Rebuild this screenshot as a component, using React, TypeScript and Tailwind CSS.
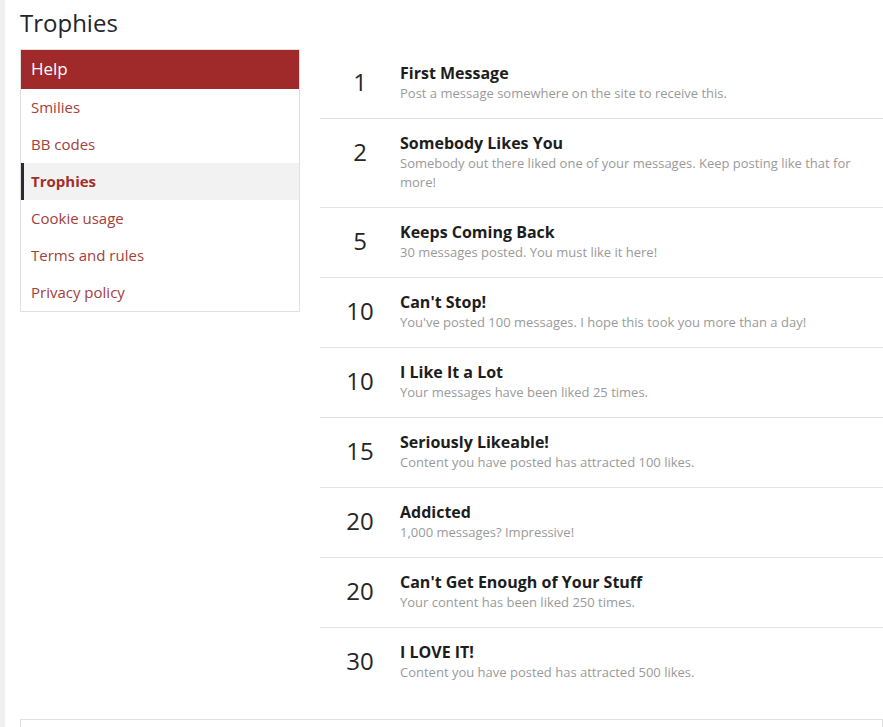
import React from "react";

interface Trophy {
  points: number;
  title: string;
  description: string;
}

const trophies: Trophy[] = [
  { points: 1, title: "First Message", description: "Post a message somewhere on the site to receive this." },
  {
    points: 2,
    title: "Somebody Likes You",
    description: "Somebody out there liked one of your messages. Keep posting like that for more!",
  },
  { points: 5, title: "Keeps Coming Back", description: "30 messages posted. You must like it here!" },
  { points: 10, title: "Can't Stop!", description: "You've posted 100 messages. I hope this took you more than a day!" },
  { points: 10, title: "I Like It a Lot", description: "Your messages have been liked 25 times." },
  { points: 15, title: "Seriously Likeable!", description: "Content you have posted has attracted 100 likes." },
  { points: 20, title: "Addicted", description: "1,000 messages? Impressive!" },
  { points: 20, title: "Can't Get Enough of Your Stuff", description: "Your content has been liked 250 times." },
  { points: 30, title: "I LOVE IT!", description: "Content you have posted has attracted 500 likes." },
];

const helpLinks = ["Smilies", "BB codes", "Trophies", "Cookie usage", "Terms and rules", "Privacy policy"];

export default function App() {
  return (
    <div className="min-h-screen bg-white border-l-[5px] border-[#efefef] font-['Open_Sans',sans-serif] overflow-hidden">
      <div className="pl-[15px]">
        {/* ===== PAGE TITLE ===== */}
        <h1 className="text-[24px] leading-[30px] pt-[8px] pb-[11px] text-[#24242c]">Trophies</h1>

        <div className="flex gap-5 items-start">
          {/* ===== SIDEBAR ===== */}
          <div className="w-[280px] shrink-0 border border-[#e0e0e0]">
            <div className="h-[39px] bg-[#a02a2a] text-white text-[17px] leading-[38px] pl-[10px]">Help</div>
            <ul>
              {helpLinks.map((link) =>
                link === "Trophies" ? (
                  <li
                    key={link}
                    className="h-[37px] bg-[#f2f2f2] border-l-[3px] border-[#2a2a33] pl-[7px] text-[15px] leading-[37px] font-bold text-[#a0302c]"
                  >
                    {link}
                  </li>
                ) : (
                  <li key={link} className="h-[37px] pl-[10px] text-[15px] leading-[37px] text-[#a3403b]">
                    {link}
                  </li>
                )
              )}
            </ul>
          </div>

          {/* ===== TROPHY LIST ===== */}
          <ol className="flex-1 min-w-0">
            {trophies.map((t, i) => (
              <li
                key={i}
                className={`flex items-start pt-[13px] pb-[15px] ${
                  i < trophies.length - 1 ? "border-b border-[#e3e3e3]" : ""
                }`}
              >
                <div className="w-[80px] shrink-0 pt-[5px] text-center text-[24px] leading-[30px] text-[#262626]">
                  {t.points}
                </div>
                <div className="flex-1 pr-[10px]">
                  <h3 className="text-[16px] leading-[22px] font-bold text-[#1d1d1d]">{t.title}</h3>
                  <p className="text-[13px] leading-[19px] text-[#9a9a9a]">{t.description}</p>
                </div>
              </li>
            ))}
          </ol>
        </div>

        {/* ===== BOTTOM BOX ===== */}
        <div className="mt-[22px] h-[60px] border border-[#e0e0e0]"></div>
      </div>
    </div>
  );
}
